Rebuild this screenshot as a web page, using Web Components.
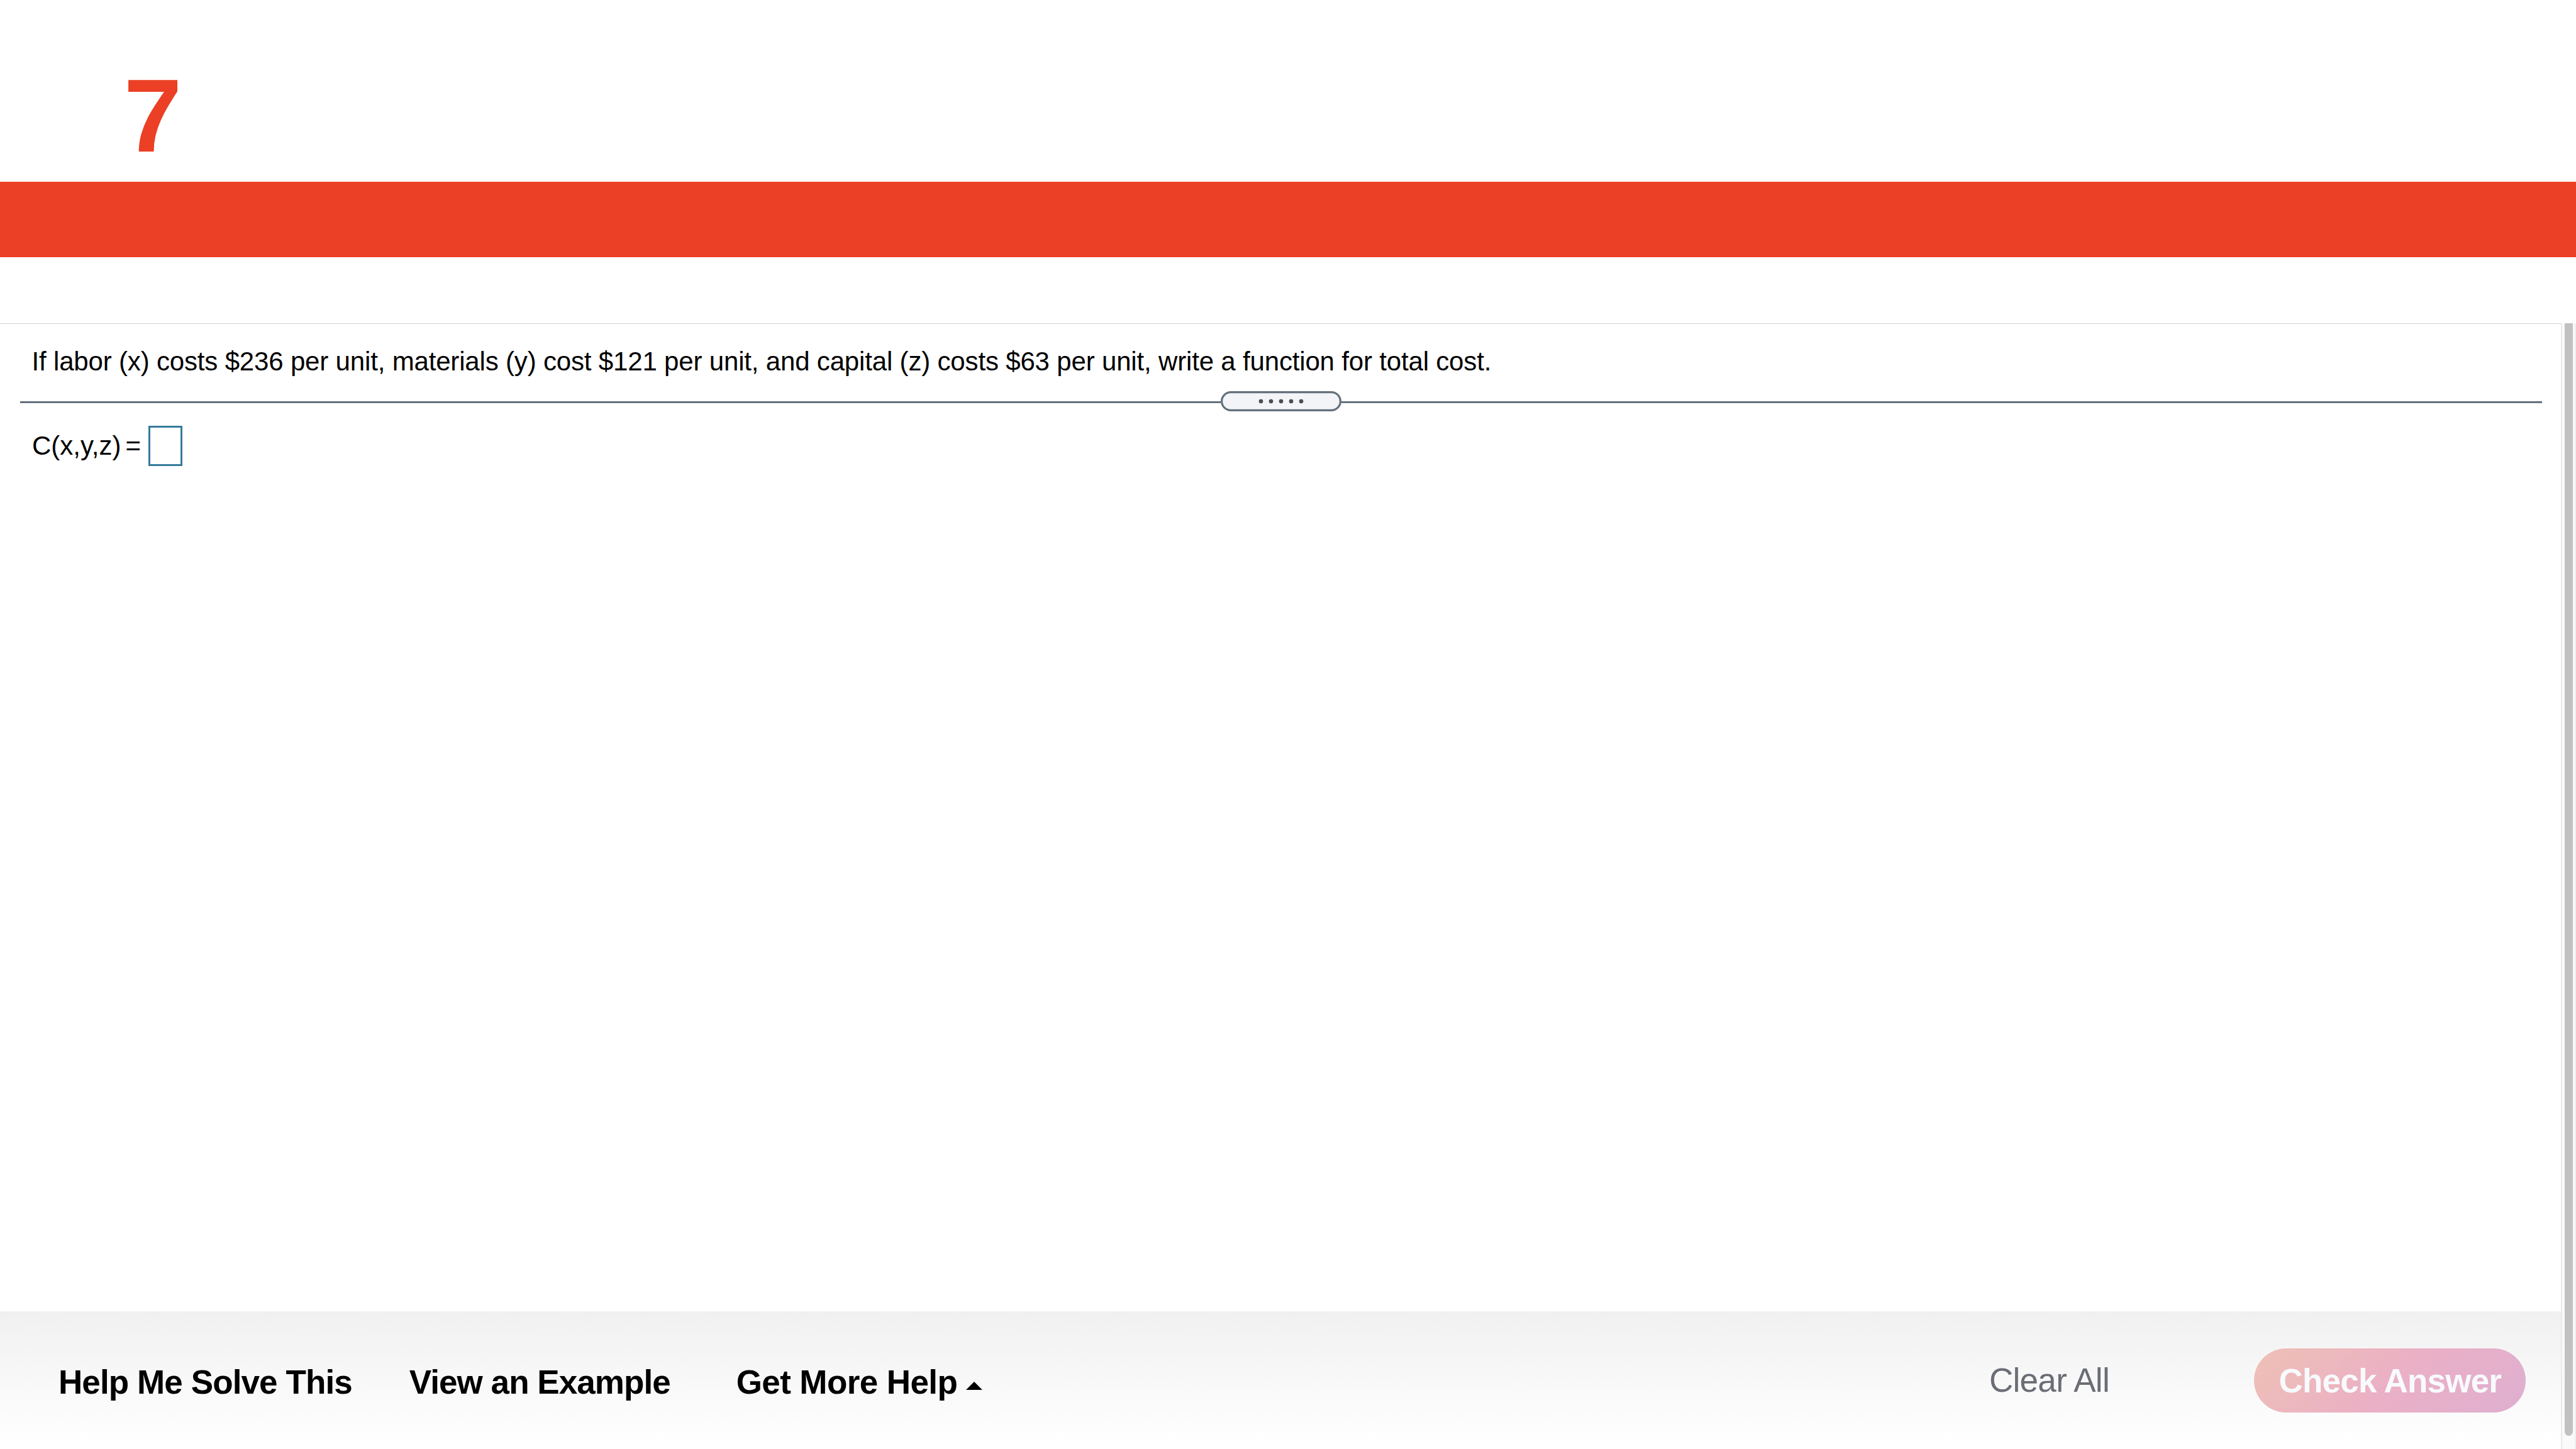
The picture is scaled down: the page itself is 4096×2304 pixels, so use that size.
<!DOCTYPE html>
<html lang="en">
<head>
<meta charset="utf-8">
<title>Exercise 7</title>
<style>
html, body {
    margin: 0;
    height: 100%;
    background: #fff;
    overflow: hidden;
}
body {
    font-family: "Liberation Sans", Arial, sans-serif;
    color: #000;
}
</style>
</head>
<body>
<exercise-page>
    <exercise-header slot="header">7</exercise-header>
    <question-panel slot="main">
        <span slot="question">If labor (x) costs $236 per unit, materials (y) cost $121 per unit, and capital (z) costs $63 per unit, write a function for total cost.</span>
        <answer-field slot="answer">C(x,y,z)</answer-field>
    </question-panel>
    <help-bar slot="footer">
        <help-link style="--track:-0.9px">Help Me Solve This</help-link>
        <help-link style="--track:-0.95px">View an Example</help-link>
        <help-link style="--track:-0.6px" menu>Get More Help</help-link>
        <clear-button slot="actions">Clear All</clear-button>
        <check-button slot="actions">Check Answer</check-button>
    </help-bar>
    <scroll-track slot="scroll"></scroll-track>
</exercise-page>

<script>
function define(name, html) {
    const template = document.createElement('template')
    template.innerHTML = html
    customElements.define(name, class extends HTMLElement {
        constructor() {
            super()
            this.attachShadow({ mode: 'open' })
            this.shadowRoot.appendChild(template.content.cloneNode(true))
        }
    })
}

// page frame: header on top, content and scrollbar side by side below
define('exercise-page', `
<style>
:host {
    display: flex;
    flex-direction: column;
    width: 4096px;
    height: 2304px;
}
.below {
    display: flex;
    flex: 1;
    min-height: 0;
}
.column {
    display: flex;
    flex-direction: column;
    width: 4072px;
}
</style>
<slot name="header"></slot>
<div class="below">
    <div class="column">
        <slot name="main"></slot>
        <slot name="footer"></slot>
    </div>
    <slot name="scroll"></slot>
</div>
`)

define('exercise-header', `
<style>
:host {
    display: block;
    height: 514px;
    color: #eb4025;
}
.number {
    box-sizing: border-box;
    height: 289px;
    padding: 84px 0 0 197px;
    font-size: 166px;
    line-height: 200px;
    font-weight: bold;
}
.band {
    height: 120px;
    background: #eb4025;
}
</style>
<div class="number"><slot></slot></div>
<div class="band"></div>
`)

define('question-panel', `
<style>
:host {
    display: flex;
    flex-direction: column;
    box-sizing: border-box;
    height: 1571px;
    border-top: 1px solid #d3d3da;
}
.question {
    padding: 34px 0 0 50.5px;
    height: 73px;
    font-size: 42px;
    line-height: 52px;
    letter-spacing: -0.17px;
    white-space: nowrap;
}
.answer {
    padding: 23px 0 0 51px;
}
</style>
<div class="question"><slot name="question"></slot></div>
<split-handle></split-handle>
<div class="answer"><slot name="answer"></slot></div>
`)

// divider line with the drag handle in the middle
define('split-handle', `
<style>
:host {
    display: flex;
    align-items: center;
    height: 32px;
    margin: 0 30.4px 0 32px;
}
.line {
    flex: 1;
    height: 3px;
    margin-top: 3px;
    background: #63707d;
}
svg {
    display: block;
    width: 192px;
    height: 32px;
}
</style>
<div class="line"></div>
<svg viewBox="0 0 240 40">
    <rect x="2" y="2" width="236" height="36" rx="18" fill="#f3f4f7" stroke="#63707d" stroke-width="4"/>
    <g fill="#4d4d4d">
        <circle cx="80" cy="20" r="4.2"/>
        <circle cx="100" cy="20" r="4.2"/>
        <circle cx="120" cy="20" r="4.2"/>
        <circle cx="140" cy="20" r="4.2"/>
        <circle cx="160" cy="20" r="4.2"/>
    </g>
</svg>
<div class="line"></div>
`)

define('answer-field', `
<style>
:host {
    display: flex;
    align-items: center;
    height: 64px;
    font-size: 42px;
    line-height: 64px;
}
.equals {
    margin: 0 12px 0 7px;
}
.box {
    box-sizing: border-box;
    width: 54px;
    height: 64px;
    border: 3px solid #347a9b;
    background: #fff;
}
</style>
<slot></slot>
<span class="equals">=</span>
<div class="box"></div>
`)

define('help-bar', `
<style>
:host {
    display: flex;
    align-items: flex-start;
    justify-content: space-between;
    flex: 1;
    background: linear-gradient(#f0f0f0, #fff 95%);
}
.links {
    display: flex;
    padding: 83px 0 0 93px;
}
.actions {
    display: flex;
    align-items: flex-start;
    padding: 59px 56px 0 0;
}
</style>
<div class="links"><slot></slot></div>
<div class="actions"><slot name="actions"></slot></div>
`)

define('help-link', `
<style>
:host {
    display: flex;
    align-items: flex-start;
    margin-right: 91px;
    font-size: 53px;
    line-height: 60px;
    font-weight: bold;
    letter-spacing: var(--track);
    white-space: nowrap;
}
svg {
    display: none;
    width: 26px;
    height: 13px;
    margin: 28.5px 0 0 14px;
}
:host([menu]) {
    margin-left: 14px;
}
:host([menu]) svg {
    display: block;
}
</style>
<slot></slot>
<svg viewBox="0 0 26 13"><path d="M0 13L13 0L26 13Z"/></svg>
`)

define('clear-button', `
<style>
:host {
    display: block;
    margin: 21px 230px 0 0;
    font-size: 53px;
    line-height: 60px;
    letter-spacing: -0.7px;
    color: #6a6d75;
    white-space: nowrap;
}
</style>
<slot></slot>
`)

define('check-button', `
<style>
:host {
    display: block;
    box-sizing: border-box;
    width: 432px;
    height: 102px;
    padding-left: 39.5px;
    border-radius: 51px;
    background: linear-gradient(135deg, #eec1b5, #ebb0c5 50%, #deafd1);
    box-shadow: 0 0 10px rgba(255, 255, 255, .4);
    font-size: 53px;
    line-height: 103px;
    font-weight: bold;
    letter-spacing: -0.8px;
    color: #f8fafc;
    white-space: nowrap;
}
</style>
<slot></slot>
`)

define('scroll-track', `
<style>
:host {
    display: block;
    box-sizing: border-box;
    width: 24px;
    padding: 0 3px 21px 4px;
    border-left: 2px solid #e9e9e9;
    border-right: 2px solid #efefef;
    background: #fafafa;
}
.thumb {
    width: 13px;
    height: 100%;
    border-radius: 0 0 6.5px 6.5px;
    background: #c1c1c1;
}
</style>
<div class="thumb"></div>
`)
</script>
</body>
</html>
